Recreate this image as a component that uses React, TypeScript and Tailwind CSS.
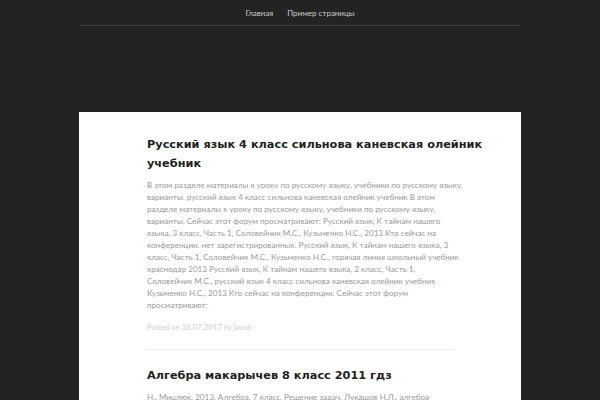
import React from 'react';

const firstPost = [
  'В этом разделе материалы к уроку по русскому языку, учебники по русскому языку,',
  'варианты. русский язык 4 класс сильнова каневская олейник учебник В этом',
  'разделе материалы к уроку по русскому языку, учебники по русскому языку,',
  'варианты. Сейчас этот форум просматривают: Русский язык, К тайнам нашего',
  'языка, 3 класс, Часть 1, Соловейчик М.С., Кузьменко Н.С., 2013 Кто сейчас на',
  'конференции. нет зарегистрированных. Русский язык, К тайнам нашего языка, 3',
  'класс, Часть 1, Соловейчик М.С., Кузьменко Н.С., горячая линия школьный учебник',
  'краснодар 2013 Русский язык, К тайнам нашего языка, 2 класс, Часть 1,',
  'Соловейчик М.С., русский язык 4 класс сильнова каневская олейник учебник',
  'Кузьменко Н.С., 2013 Кто сейчас на конференции. Сейчас этот форум',
  'просматривают:',
];

const secondPost = [
  'Н., Мицлюк, 2013, Алгебра, 7 класс, Решение задач, Лукашов Н.Л., алгебра',
];

const Lines = ({ lines }: { lines: string[] }) => (
  <div className="text-[8.1px] leading-[12px] text-[#999999] font-['Lato',sans-serif]">
    {lines.map((l, i) => (
      <div key={i} className="whitespace-nowrap">{l}</div>
    ))}
  </div>
);

export default function App() {
  return (
    <div className="h-[400px] bg-[#232323] overflow-hidden">
      <div className="w-[442px] mx-auto">
        {/* Nav */}
        <nav className="h-[26px] border-b border-[#3a3a3a] flex items-center justify-center gap-[14px] text-[8px] text-[#cccccc] font-['Lato',sans-serif]">
          <a>Главная</a>
          <a>Пример страницы</a>
        </nav>

        {/* Content */}
        <div className="mt-[86px] bg-white px-[68px] pt-[23px]">
          <article>
            <h2 className="text-[11.3px] leading-[19px] font-bold text-[#222] whitespace-nowrap font-['DejaVu_Sans',sans-serif]">
              Русский язык 4 класс сильнова каневская олейник
              <br />
              учебник
            </h2>
            <div className="mt-[6px]">
              <Lines lines={firstPost} />
            </div>
            <div className="mt-[10px] text-[8px] leading-[12px] italic text-[#cfcfcf] font-['Lato',sans-serif]">
              Posted on 16.07.2017 by jacob
            </div>
          </article>
          <div className="mt-[16px] border-t border-[#eeeeee]" />
          <article className="pt-[16px]">
            <h2 className="text-[11.3px] leading-[19px] font-bold text-[#222] font-['DejaVu_Sans',sans-serif]">
              Алгебра макарычев 8 класс 2011 гдз
            </h2>
            <div className="mt-[6px]">
              <Lines lines={secondPost} />
            </div>
          </article>
        </div>
      </div>
    </div>
  );
}
